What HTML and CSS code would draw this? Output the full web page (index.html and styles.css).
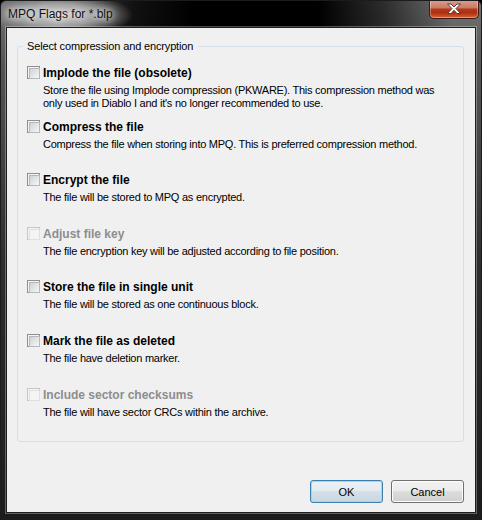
FILE: index.html
```html
<!DOCTYPE html>
<html lang="en">
<head>
<meta charset="utf-8">
<title>MPQ Flags for *.blp</title>
<link rel="stylesheet" href="styles.css">
</head>
<body>
<div class="window">
  <div class="titlebar">
    <span class="title">MPQ Flags for *.blp</span>
    <button class="close" aria-label="Close">
      <svg width="16" height="12" viewBox="0 0 16 12"><path d="M1.5 1 L5 1 L8 4 L11 1 L14.5 1 L10 5.6 L14.5 10.5 L11 10.5 L8 7.3 L5 10.5 L1.5 10.5 L6 5.6 Z" fill="#ffffff" stroke="#5a3a32" stroke-width="1" stroke-linejoin="round"/></svg>
    </button>
  </div>
  <div class="frame">
    <div class="client">
      <fieldset class="group">
        <legend>Select compression and encryption</legend>
        <div class="options">
          <div class="opt">
            <label class="opt-head"><span class="cb"></span><span class="opt-title">Implode the file (obsolete)</span></label>
            <p class="opt-desc">Store the file using Implode compression (PKWARE). This compression method was<br>only used in Diablo I and it's no longer recommended to use.</p>
          </div>
          <div class="opt">
            <label class="opt-head"><span class="cb"></span><span class="opt-title">Compress the file</span></label>
            <p class="opt-desc">Compress the file when storing into MPQ. This is preferred compression method.</p>
          </div>
          <div class="opt">
            <label class="opt-head"><span class="cb"></span><span class="opt-title">Encrypt the file</span></label>
            <p class="opt-desc">The file will be stored to MPQ as encrypted.</p>
          </div>
          <div class="opt disabled">
            <label class="opt-head"><span class="cb"></span><span class="opt-title">Adjust file key</span></label>
            <p class="opt-desc">The file encryption key will be adjusted according to file position.</p>
          </div>
          <div class="opt">
            <label class="opt-head"><span class="cb"></span><span class="opt-title">Store the file in single unit</span></label>
            <p class="opt-desc">The file will be stored as one continuous block.</p>
          </div>
          <div class="opt">
            <label class="opt-head"><span class="cb"></span><span class="opt-title">Mark the file as deleted</span></label>
            <p class="opt-desc">The file have deletion marker.</p>
          </div>
          <div class="opt disabled">
            <label class="opt-head"><span class="cb"></span><span class="opt-title">Include sector checksums</span></label>
            <p class="opt-desc">The file will have sector CRCs within the archive.</p>
          </div>
        </div>
      </fieldset>
      <div class="buttons">
        <button class="btn default">OK</button>
        <button class="btn">Cancel</button>
      </div>
    </div>
  </div>
</div>
</body>
</html>
```
FILE: styles.css
```css
* { box-sizing: border-box; }

body {
  margin: 0;
  background: #000;
  font-family: "Liberation Sans", Arial, sans-serif;
}

.window {
  width: 482px;
  height: 520px;
  border: 1px solid #1c1c1c;
  border-radius: 6px 6px 0 0;
  display: flex;
  flex-direction: column;
  overflow: hidden;
  background:
    radial-gradient(ellipse 72px 22px at 60px 14px, rgba(210,210,210,0.95) 0%, rgba(190,190,190,0.75) 50%, rgba(150,150,150,0) 100%) no-repeat,
    linear-gradient(to right, rgba(0,0,0,0) 0%, rgba(0,0,0,0.85) 28%, #000 40%, #000 66%, rgba(0,0,0,0.6) 80%, rgba(0,0,0,0) 94%) 0 0 / 100% 27px no-repeat,
    linear-gradient(to bottom, #727272 0%, #555 12%, #2e2e2e 50%, #1c1c1c 100%);
}

.titlebar {
  height: 26px;
  flex: none;
  display: flex;
  justify-content: space-between;
  align-items: flex-start;
}

.title {
  margin: 6px 0 0 7px;
  font-size: 12px;
  line-height: 15px;
  color: #111;
  text-shadow: 0 0 6px #fff, 0 0 10px rgba(255,255,255,0.8);
}

.close {
  width: 50px;
  height: 19px;
  margin: -1px 2px 0 0;
  padding: 0;
  border: 1px solid #3e1a12;
  border-top: none;
  border-radius: 0 0 5px 5px;
  background: linear-gradient(#d9a092 0%, #cc7b66 42%, #b4361b 52%, #b0300f 72%, #d8643b 100%);
  box-shadow: inset 0 0 0 1px rgba(255,255,255,0.35);
  display: flex;
  align-items: center;
  justify-content: center;
}

.close svg { display: block; }

.frame {
  flex: 1;
  display: flex;
  padding: 0 5px 6px 5px;
}

.client {
  flex: 1;
  display: flex;
  flex-direction: column;
  background: #f0f0f0;
  border: 1px solid #1e1e1e;
  box-shadow: 0 0 0 1px rgba(255,255,255,0.3);
  font-size: 11px;
  color: #000;
}

.group {
  margin: 12px 11px 0 10px;
  padding: 13px 0 0 9px;
  border: 1px solid #d5dfe5;
  border-radius: 3px;
  height: 402px;
  min-width: 0;
}

.group legend {
  margin-left: -4px;
  padding: 0 5px 0 4px;
  font-size: 11px;
  line-height: 13px;
  letter-spacing: -0.15px;
}

.options {
  display: grid;
  grid-template-rows: 54px 53px 54px 53px 54px 54px 54px;
}

.opt-head {
  display: flex;
  align-items: center;
  gap: 3px;
  height: 13px;
  font-weight: bold;
  font-size: 12px;
}

.cb {
  width: 13px;
  height: 13px;
  flex: none;
  border: 1px solid #8e8f8f;
  background: #f4f4f4;
  padding: 1px;
}

.cb::after {
  content: "";
  display: block;
  width: 9px;
  height: 9px;
  border: 1px solid #b4b7bb;
  background: linear-gradient(135deg, #cfd2d6, #f7f7f7);
}

.opt-desc {
  margin: 5px 0 0 16px;
  line-height: 13px;
  letter-spacing: -0.25px;
}

.disabled .opt-title { color: #8d8d8d; }

.disabled .cb { border-color: #c6c6c6; }

.disabled .cb::after {
  border-color: #e0e0e0;
  background: #f4f4f4;
}

.buttons {
  margin-top: auto;
  display: flex;
  justify-content: flex-end;
  gap: 8px;
  padding: 0 11px 9px 0;
}

.btn {
  width: 73px;
  height: 23px;
  padding: 0;
  border: 1px solid #707070;
  border-radius: 3px;
  background: linear-gradient(#f2f2f2 0%, #ebebeb 50%, #dddddd 50%, #cfcfcf 100%);
  box-shadow: inset 0 0 0 1px #fcfcfc;
  font-family: "Liberation Sans", Arial, sans-serif;
  font-size: 11px;
  color: #000;
}

.btn.default {
  border-color: #3c7fb1;
  background: linear-gradient(#eaf1f6 0%, #e3ebf1 50%, #d5e0e8 50%, #cad7e0 100%);
  box-shadow: inset 0 0 0 1px #9fd8f3;
}
```
